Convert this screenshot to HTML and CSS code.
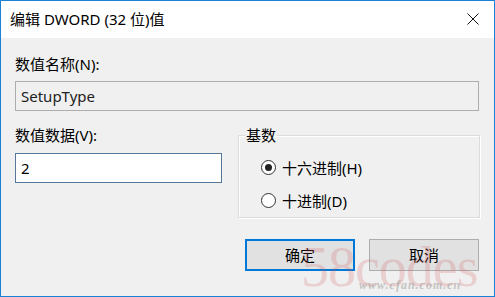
FILE: index.html
```html
<!DOCTYPE html>
<html lang="zh-CN">
<head>
    <meta charset="UTF-8">
    <title>编辑 DWORD (32 位)值</title>
    <link rel="stylesheet" href="styles.css">
</head>
<body>
    <div class="window">
        <div class="titlebar">
            <span class="title">编辑 DWORD (32 位)值</span>
            <svg class="close" width="12" height="12" viewBox="0 0 12 12">
                <path d="M0.5 0.5 L11.5 11.5 M11.5 0.5 L0.5 11.5" stroke="#111" stroke-width="1" fill="none"/>
            </svg>
        </div>
        <div class="content">
            <div class="label">数值名称(N):</div>
            <div class="field disabled">SetupType</div>

            <div class="row">
                <div class="col">
                    <div class="label">数值数据(V):</div>
                    <div class="field value">2</div>
                </div>
                <fieldset class="group">
                    <legend>基数</legend>
                    <div class="radio"><span class="dot checked"></span>十六进制(H)</div>
                    <div class="radio"><span class="dot"></span>十进制(D)</div>
                </fieldset>
            </div>

            <div class="buttons">
                <div class="btn default">确定</div>
                <div class="btn">取消</div>
            </div>
        </div>
        <div class="watermark">58codes</div>
        <div class="watermark-url">www.cfan.com.cn</div>
    </div>
</body>
</html>
```

FILE: styles.css
```css
body { margin: 0; font-family: "Noto Sans", "Noto Sans CJK SC", sans-serif; font-size: 15px; color: #000; }
.window { position: relative; width: 495px; height: 297px; box-sizing: border-box; border: 1px solid #1a82d6; display: flex; flex-direction: column; background: #f0f0f0; overflow: hidden; }
.titlebar { height: 37px; background: #fff; display: flex; align-items: center; justify-content: space-between; padding: 0 15px 0 9px; flex-shrink: 0; }
.title { font-size: 15px; line-height: 20px; margin-top: -1px; }
.close { display: block; margin-top: -1px; }
.content { flex: 1; padding: 16px 15px 0 14px; }
.label { line-height: 20px; height: 20px; }
.field { box-sizing: border-box; height: 30px; line-height: 28px; padding: 0 5px; border: 1px solid #adadad; }
.field.disabled { margin-top: 7px; background: #f0f0f0; color: #222; }
.row { display: grid; grid-template-columns: 207px 242px; column-gap: 16px; margin-top: 14px; }
.field.value { margin-top: 8px; background: #fff; border-color: #56799b; }
.group { margin: 0; padding: 12px 0 7px 22px; border: 1px solid #dcdcdc; box-shadow: inset 1px 1px 0 #fff, 1px 1px 0 #fff; min-width: 0; }
.group legend { padding: 0 1px; margin-left: -16px; line-height: 20px; }
.radio { display: flex; align-items: center; height: 20px; margin-bottom: 13px; }
.radio:last-child { margin-bottom: 0; }
.dot { width: 13px; height: 13px; border: 1px solid #333; border-radius: 50%; background: #fff; margin-right: 6px; position: relative; }
.dot.checked::after { content: ""; position: absolute; left: 3px; top: 3px; width: 7px; height: 7px; border-radius: 50%; background: #222; }
.buttons { display: flex; justify-content: flex-end; gap: 14px; margin-top: 21px; }
.btn { box-sizing: border-box; width: 110px; height: 32px; line-height: 30px; text-align: center; background: #e1e1e1; border: 1px solid #adadad; }
.btn.default { border: 2px solid #0078d7; line-height: 28px; }
.watermark { position: absolute; left: 300px; top: 236px; font-family: "Liberation Serif", serif; font-size: 56px; line-height: 60px; color: rgba(210, 90, 90, 0.22); letter-spacing: -1px; pointer-events: none; }
.watermark-url { position: absolute; left: 358px; top: 277px; font-family: "Liberation Serif", serif; font-style: italic; font-weight: bold; font-size: 12px; line-height: 14px; color: rgba(150, 150, 150, 0.5); letter-spacing: 1px; }
```
